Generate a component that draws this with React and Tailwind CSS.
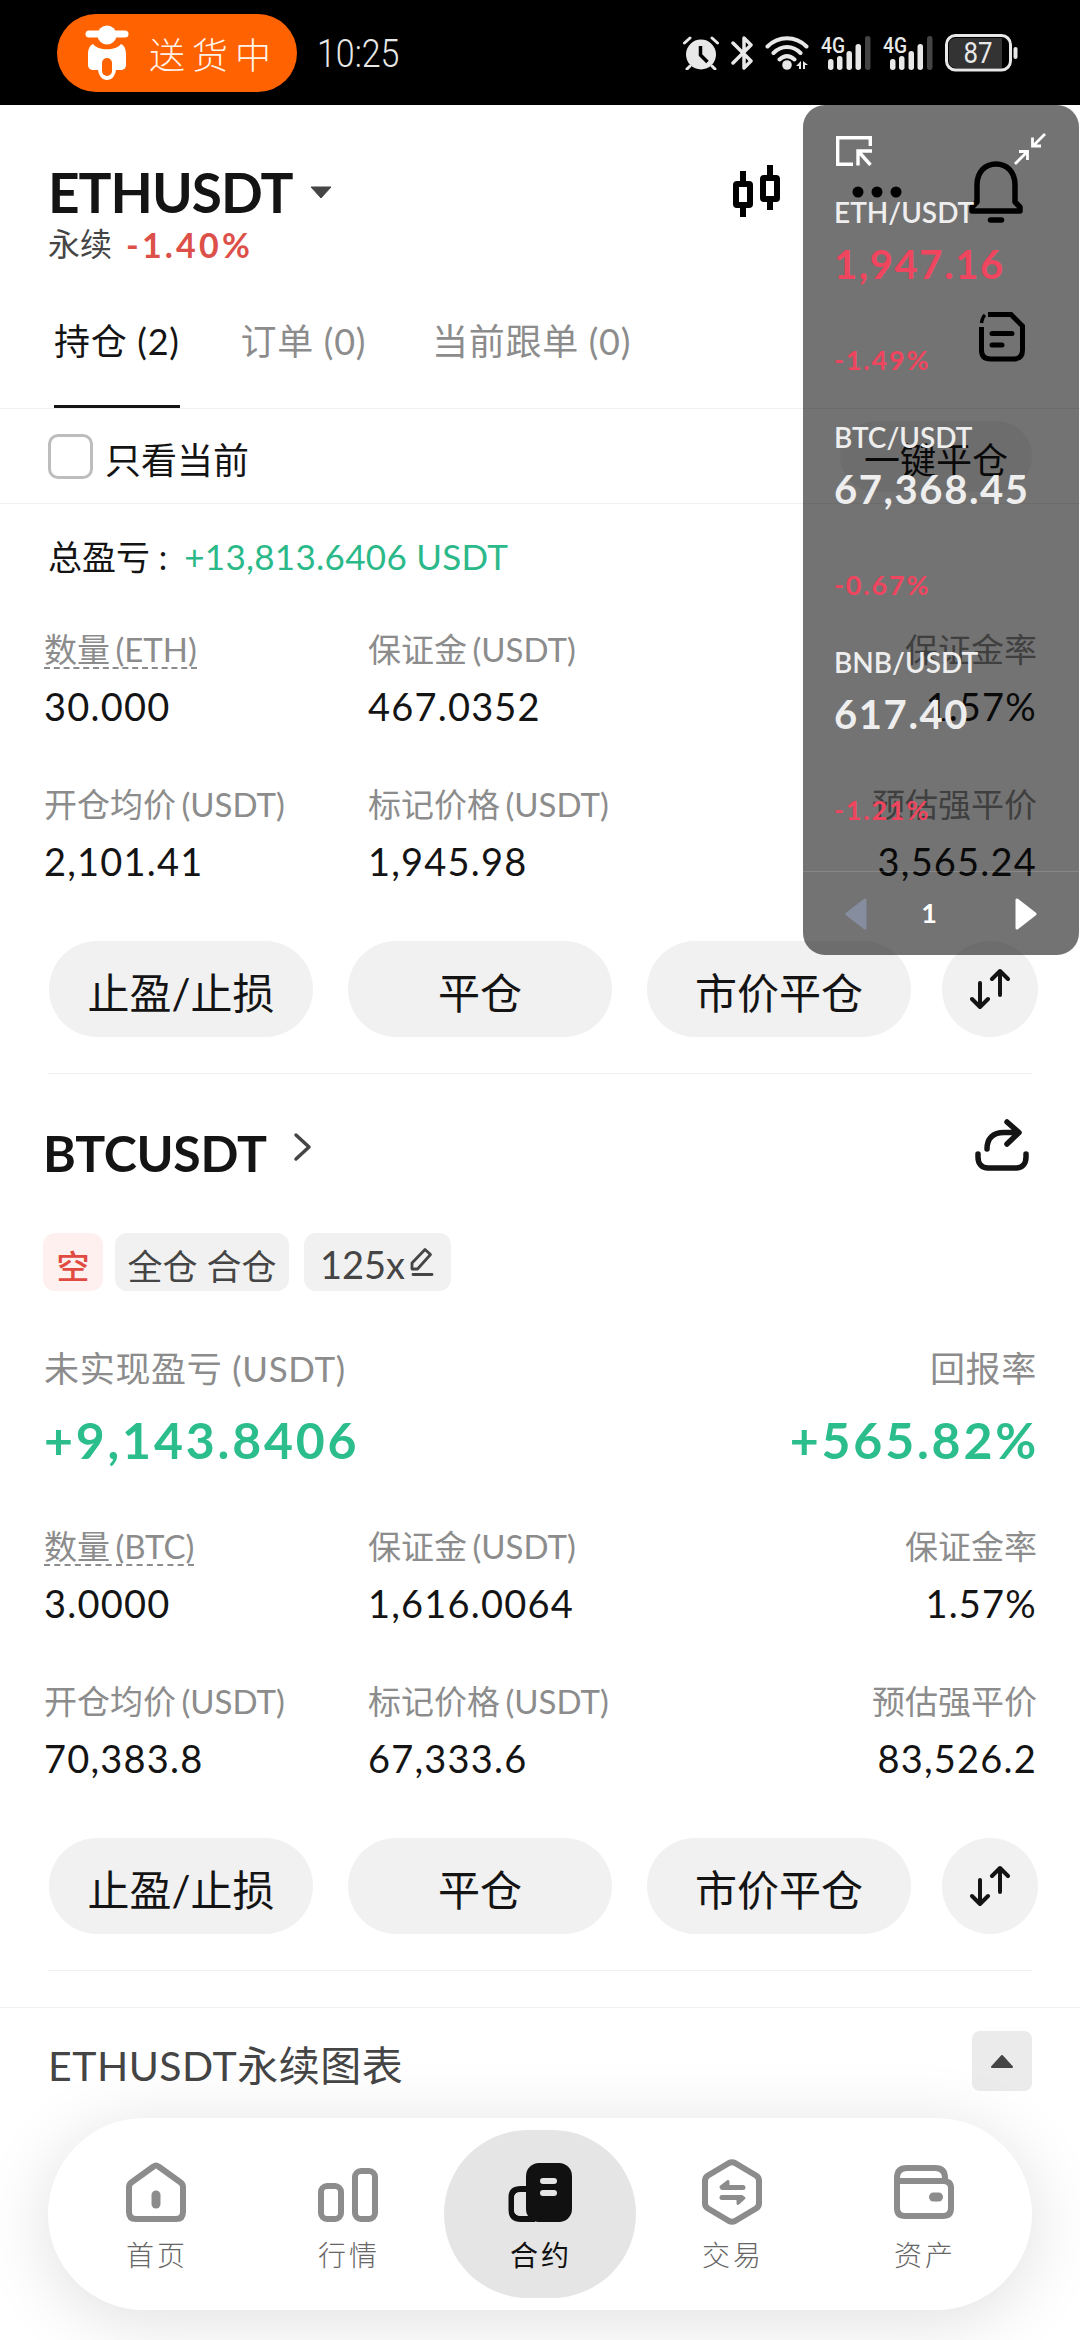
import React, { useState } from "react";

const ethStats = [
  { label: "数量 (ETH)", value: "30.000", dashed: true },
  { label: "保证金 (USDT)", value: "467.0352" },
  { label: "保证金率", value: "1.57%" },
  { label: "开仓均价 (USDT)", value: "2,101.41" },
  { label: "标记价格 (USDT)", value: "1,945.98" },
  { label: "预估强平价", value: "3,565.24" },
];

const btcStats = [
  { label: "数量 (BTC)", value: "3.0000", dashed: true },
  { label: "保证金 (USDT)", value: "1,616.0064" },
  { label: "保证金率", value: "1.57%" },
  { label: "开仓均价 (USDT)", value: "70,383.8" },
  { label: "标记价格 (USDT)", value: "67,333.6" },
  { label: "预估强平价", value: "83,526.2" },
];

const tickers = [
  { pair: "ETH/USDT", price: "1,947.16", change: "-1.49%", down: true },
  { pair: "BTC/USDT", price: "67,368.45", change: "-0.67%" },
  { pair: "BNB/USDT", price: "617.40", change: "-1.21%" },
];

/* ----------------- ICONS ------------------------ */

const ScooterIcon = () => (
  <svg width="44" height="56" viewBox="0 0 44 56">
    <path d="M4 9h36" stroke="#fff" strokeWidth="7" strokeLinecap="round" />
    <circle cx="22" cy="10" r="9.500" fill="#fff" />
    <path
      fill="#fff"
      d="M8 19c5 7 23 7 28 0 4 2 5 6 5 11v10c0 3-2 5-6 5h-4c-1 6-4 10-9 10s-8-4-9-10H9c-4 0-6-2-6-5V30c0-5 1-9 5-11z"
    />
    <rect x="17" y="33" width="10" height="18" rx="5" fill="#ff6200" />
  </svg>
);

const AlarmIcon = () => (
  <svg width="36" height="34" viewBox="0 0 36 34" fill="none" stroke="#e8e8e8" strokeLinecap="round">
    <circle cx="18" cy="18.500" r="15" fill="#e8e8e8" stroke="none" />
    <path d="M1.500 7 7 2M34.500 7 29 2M7 30l-3 3M29 30l3 3" strokeWidth="3" />
    <path d="M17.500 10v9l7 7" stroke="#000" strokeWidth="3.500" strokeLinecap="butt" />
  </svg>
);

const BluetoothIcon = () => (
  <svg width="22" height="34" viewBox="0 0 22 34" fill="none" stroke="#e8e8e8" strokeWidth="3.500" strokeLinejoin="round" strokeLinecap="round">
    <path d="M2 7l18 18-7 7V2l7 7L2 27" />
  </svg>
);

const WifiIcon = () => (
  <svg width="44" height="34" viewBox="0 0 44 34" fill="none" stroke="#e8e8e8" strokeWidth="4" strokeLinecap="round">
    <path d="M2.500 10.500c11-11 28-11 39 0M8.500 17c8-8 19-8 27 0M14.500 23.500c5-4.500 10-4.500 15 0" />
    <circle cx="22" cy="29" r="4.800" fill="#e8e8e8" stroke="none" />
    <path d="M31 30l5-5v8h-2v-3zM38 25l5 4h-3v4h-2z" fill="#e8e8e8" stroke="none" />
  </svg>
);

const SignalIcon = () => (
  <svg width="50" height="46" viewBox="0 -6 50 46">
    <text x="0" y="16.500" fontSize="22" fontWeight="500" fontFamily="Roboto, sans-serif" fill="#e8e8e8" textLength="24" lengthAdjust="spacingAndGlyphs">
      4G
    </text>
    <g fill="#e8e8e8">
      <rect x="7" y="23" width="5.500" height="11" rx="2.700" />
      <rect x="16" y="20" width="5.500" height="14" rx="2.700" />
      <rect x="25.500" y="15" width="5.500" height="19" rx="2.700" />
      <rect x="34.500" y="8" width="5.500" height="26" rx="2.700" />
    </g>
    <rect x="44" y="0" width="5.500" height="34" rx="2.700" fill="#444" />
  </svg>
);

const BatteryIcon = () => (
  <svg width="73" height="38" viewBox="0 0 73 38">
    <rect x="1.500" y="1.500" width="64" height="34.500" rx="9" fill="#000" stroke="#e8e8e8" strokeWidth="3" />
    <path d="M11 4h46v30H11q-7 0-7-7V11q0-7 7-7z" fill="#333" />
    <rect x="68.500" y="13" width="4" height="12" rx="2" fill="#e8e8e8" />
    <text x="33" y="29" textAnchor="middle" fontSize="29" fontFamily="Roboto, sans-serif" fill="#e8e8e8" textLength="29" lengthAdjust="spacingAndGlyphs">
      87
    </text>
  </svg>
);

const CandlesIcon = () => (
  <svg width="48" height="54" viewBox="0 0 48 54" fill="none" stroke="#000" strokeWidth="6">
    <path d="M10 6v10M10 43v9M37 0v10M37 36v9" />
    <rect x="3" y="19" width="14" height="21" rx="1" />
    <rect x="30" y="13" width="14" height="21" rx="1" />
  </svg>
);

const DotsIcon = () => (
  <svg width="50" height="12" viewBox="0 0 50 12">
    <circle cx="6" cy="6" r="5.500" />
    <circle cx="25" cy="6" r="5.500" />
    <circle cx="44" cy="6" r="5.500" />
  </svg>
);

const BellIcon = () => (
  <svg width="54" height="62" viewBox="0 0 54 62" fill="none" stroke="#000" strokeWidth="5.500" strokeLinecap="round" strokeLinejoin="round">
    <path d="M8 41V24C8 11 16 3 27 3S46 11 46 24v17l5 5v4H3v-4z" />
    <path d="M21.500 59h11" />
  </svg>
);

const DocIcon = () => (
  <svg width="46" height="50" viewBox="0 0 46 50" fill="none" stroke="#000" strokeWidth="5" strokeLinecap="round">
    <path d="M9 2.500h23l11.500 11.500v24q0 9-9 9H11.500q-9 0-9-9V15" strokeLinecap="butt" />
    <path d="M2.500 11q1-6 3.500-8" strokeWidth="3.500" strokeLinecap="butt" />
    <path d="M13 21.500h20M13 33h10" />
  </svg>
);

const SortIcon = () => (
  <svg width="40" height="42" viewBox="0 0 40 42" fill="none" stroke="#141414" strokeWidth="4" strokeLinecap="round" strokeLinejoin="round">
    <path d="M10 15v24M2 31l8 8 8-8M30 27V3M22 11l8-8 8 8" />
  </svg>
);

const ShareIcon = () => (
  <svg width="54" height="52" viewBox="0 0 54 52" fill="none" stroke="#141414" strokeWidth="5.500" strokeLinecap="round" strokeLinejoin="round">
    <path d="M12 30c0-11 6-16.500 17-16.500h14M32 3l12 10.500L32 25" />
    <path d="M3 35v3c0 7 4 11 10 11h28c6 0 10-4 10-11v-3" />
  </svg>
);

const PencilIcon = () => (
  <svg width="26" height="30" viewBox="0 0 26 30" fill="none" stroke="#454545" strokeWidth="2.800" strokeLinejoin="round" strokeLinecap="round">
    <path d="M3 22v-6L16 2.500l5.500 5L8.500 22z" />
    <path d="M4 27.500h19" />
  </svg>
);

const DetachIcon = () => (
  <svg width="36" height="30" viewBox="0 0 36 30" fill="none" stroke="#fff" strokeWidth="3.400">
    <path d="M34.300 10V1.700H1.700v26.600H17M22 29.500V15h14M23 16l11.500 13" />
  </svg>
);

const ShrinkIcon = () => (
  <svg width="34" height="34" viewBox="0 0 34 34" fill="none" stroke="#fff" strokeWidth="2.800">
    <path d="M32 2 20 14M19.500 5.500V14H28M2 32l12-12M6 19.500h8.500V28" />
  </svg>
);

const HomeIcon = () => (
  <svg width="60" height="66" viewBox="0 0 60 66" fill="none" stroke="#8c8c8c" strokeWidth="6" strokeLinejoin="round">
    <path d="M27.500 7.500q2.500-2 5 0L54 23q3 2 3 5v25q0 7-7 7H10q-7 0-7-7V28q0-3 3-5z" />
    <path d="M30 36v9" strokeWidth="9" strokeLinecap="round" />
  </svg>
);

const BarsIcon = () => (
  <svg width="60" height="66" viewBox="0 0 60 66" fill="none" stroke="#8c8c8c" strokeWidth="6">
    <rect x="3" y="27" width="20" height="33" rx="6" />
    <rect x="37" y="12" width="20" height="48" rx="6" />
  </svg>
);

const ContractIcon = () => (
  <svg width="64" height="66" viewBox="0 0 64 66">
    <rect x="18" y="4" width="46" height="59" rx="13" fill="#111" />
    <path d="M22 30h-9q-9.500 0-9.500 8v13q0 9 9.500 9h14" fill="none" stroke="#111" strokeWidth="6" />
    <rect x="6" y="33.500" width="12" height="23" rx="5" fill="#e5e5e5" />
    <rect x="32" y="19" width="17" height="6" rx="3" fill="#e5e5e5" />
    <rect x="32" y="31" width="17" height="6" rx="3" fill="#e5e5e5" />
  </svg>
);

const TradeIcon = () => (
  <svg width="60" height="66" viewBox="0 0 60 66" fill="none" stroke="#8c8c8c" strokeWidth="6" strokeLinejoin="round">
    <path d="M27 4q3-1.500 6 0l21 12.500q3 2 3 5v23q0 3-3 5L33 62q-3 1.500-6 0L6 49.500q-3-2-3-5v-23q0-3 3-5z" />
    <path d="M20.500 28.500h20.500M39.500 38.500H20" strokeWidth="5" strokeLinecap="round" />
    <path d="M19 28l7-5.500V28zM42 39l-6 5.500V39z" strokeWidth="3" fill="#8c8c8c" />
  </svg>
);

const WalletIcon = () => (
  <svg width="60" height="66" viewBox="0 0 60 66" fill="none" stroke="#8c8c8c" strokeWidth="6">
    <path d="M3 24v-5q0-10 10-10h28q10 0 10 10v5" />
    <path d="M3 22h46q8 0 8 7v20q0 8-8 8H11q-8 0-8-8z" />
    <path d="M39.500 38h5" strokeWidth="9" strokeLinecap="round" />
  </svg>
);

const navItems = [
  { name: "首页", icon: <HomeIcon /> },
  { name: "行情", icon: <BarsIcon /> },
  { name: "合约", icon: <ContractIcon />, active: true },
  { name: "交易", icon: <TradeIcon /> },
  { name: "资产", icon: <WalletIcon /> },
];

/* ----------------- PARTS ------------------------ */

const StatusBar = () => (
  <div className="flex h-[105px] items-center justify-between bg-black pr-[62px] pl-[57px]">
    <div className="flex items-center">
      <div className="flex h-[78px] w-60 items-center rounded-full bg-[#ff6200] pl-7">
        <ScooterIcon />
        <span className="ml-5 pt-1 text-[36px] font-light tracking-[7px] whitespace-nowrap text-[#fff3e8]">送货中</span>
      </div>
      <span className="mt-1 ml-5 origin-left scale-x-[.87] font-[Roboto] text-[39px] leading-none font-light text-[#e8e8e8]">
        10:25
      </span>
    </div>
    <div className="flex items-center gap-3">
      <AlarmIcon />
      <BluetoothIcon />
      <WifiIcon />
      <SignalIcon />
      <SignalIcon />
      <BatteryIcon />
    </div>
  </div>
);

const Stats = ({ stats }) => (
  <div className="grid grid-cols-[324px_344px_1fr] gap-y-[41px] pr-[43px] pl-11">
    {stats.map((s, i) => (
      <div key={s.label} className={i % 3 === 2 ? "text-right" : ""}>
        <div className="flex h-[58px] items-center text-[33px] leading-[58px] text-[#8c8c8c] [word-spacing:-3px]">
          <span
            className={
              s.dashed
                ? "mt-0.5 border-b-2 border-dashed border-[#8c8c8c] leading-[36px]"
                : i % 3 === 2
                ? "ml-auto"
                : ""
            }
          >
            {s.label}
          </span>
        </div>
        <div className="h-14 text-[38px] leading-[56px] tracking-[1.2px] text-[#141414]">{s.value}</div>
      </div>
    ))}
  </div>
);

const Actions = () => (
  <div className="mt-[52px] flex h-24 items-center pr-[42px] pl-[49px] text-[42px] text-[#141414]">
    <button className="h-24 w-[264px] rounded-full bg-[#f1f1f1] pt-2">止盈/止损</button>
    <button className="ml-[35px] h-24 w-[264px] rounded-full bg-[#f1f1f1] pt-2">平仓</button>
    <button className="ml-[35px] h-24 w-[264px] rounded-full bg-[#f1f1f1] pt-2">市价平仓</button>
    <button className="ml-auto flex size-24 items-center justify-center rounded-full bg-[#f1f1f1]">
      <SortIcon />
    </button>
  </div>
);

const TickerPanel = () => {
  const [page] = useState(1);

  return (
    <div className="absolute top-[105px] left-[803px] flex h-[850px] w-[276px] flex-col rounded-[22px] bg-black/55 text-[#eee]">
      <div className="flex h-[87px] items-start justify-between pt-[27px] pr-[32px] pl-[33px]">
        <div className="pt-1">
          <DetachIcon />
        </div>
        <ShrinkIcon />
      </div>
      {tickers.map((t) => (
        <div key={t.pair} className="h-[225px] pl-[31px] font-bold">
          <div className="h-10 text-[28px] leading-10 font-semibold">{t.pair}</div>
          <div className={`h-16 text-[40px] leading-16 tracking-[1.6px] ${t.down ? "text-[#f0455e]" : ""}`}>
            {t.price}
          </div>
          <div className="mt-11 h-10 text-[27px] leading-10 tracking-[1.8px] text-[#f0455e]">{t.change}</div>
        </div>
      ))}
      <div className="mt-1 flex flex-1 items-center justify-between border-t border-white/15 pr-[42px] pl-[42px]">
        <svg width="22" height="32" viewBox="0 0 22 32">
          <path d="M20 2v28L2 16z" fill="#868d9f" stroke="#868d9f" strokeWidth="3" strokeLinejoin="round" />
        </svg>
        <span className="mr-6 text-[27px] font-bold text-white">{page}</span>
        <svg width="22" height="32" viewBox="0 0 22 32">
          <path d="M2 2v28l18-14z" fill="#fff" stroke="#fff" strokeWidth="3" strokeLinejoin="round" />
        </svg>
      </div>
    </div>
  );
};

const App = () => {
  return (
    <div className="relative flex h-[2340px] w-[1080px] flex-col overflow-hidden bg-white font-[Lato,'Noto_Sans_CJK_SC',sans-serif] text-[#141414]">
      <StatusBar />

      {/* header */}
      <div className="flex h-[168px] justify-between pt-[57px] pr-[57px] pl-12">
        <div>
          <div className="flex h-[60px] items-center gap-[18px]">
            <span className="text-[55px] leading-[60px] font-bold tracking-[-1px]">ETHUSDT</span>
            <svg width="22" height="13" viewBox="0 0 22 13">
              <path d="M1 1h20L11 12z" fill="#454545" stroke="#454545" strokeLinejoin="round" />
            </svg>
          </div>
          <div className="flex h-11 items-center gap-[14px]">
            <span className="text-[32px] text-[#454545]">永续</span>
            <span className="text-[34px] font-bold tracking-[3.200px] text-[#dc5049]">-1.40%</span>
          </div>
        </div>
        <div className="flex h-[60px] items-center">
          <CandlesIcon />
          <div className="ml-[71px]">
            <DotsIcon />
          </div>
          <div className="ml-[67px]">
            <BellIcon />
          </div>
        </div>
      </div>

      {/* tabs */}
      <div className="flex h-[136px] items-center justify-between border-b border-[#f0f0f0] pr-[55px] pl-[54px] text-[36px] tracking-[.7px] text-[#8c8c8c]">
        <div className="flex h-full items-stretch">
          <span className="flex items-center border-b-[3px] border-[#141414] pt-[3px] text-[#141414]">
            持仓 (2)
          </span>
          <span className="ml-[61px] flex items-center">订单 (0)</span>
          <span className="ml-[66px] flex items-center">当前跟单 (0)</span>
        </div>
        <div className="mb-2">
          <DocIcon />
        </div>
      </div>

      {/* filter */}
      <div className="flex h-[95px] items-center border-b border-[#f0f0f0] pr-12 pl-12">
        <span className="size-[45px] rounded-[10px] border-[3px] border-[#bdbdbd]"></span>
        <span className="ml-3 pt-2 text-[36px]">只看当前</span>
        <button className="ml-auto h-[71px] w-48 rounded-full bg-[#f1f1f1] pt-2 text-[36px]">一键平仓</button>
      </div>

      <div className="flex h-[116px] items-center pb-[11px] pl-12 text-[34px]">
        <span>总盈亏 :</span>
        <span className="ml-[17px] text-[35px] tracking-[.3px] text-[#2bb98a]">+13,813.6406 USDT</span>
      </div>

      <Stats stats={ethStats} />
      <Actions />

      <div className="mx-12 mt-9 h-px bg-[#f0f0f0]"></div>

      {/* BTC position */}
      <div className="mt-[39px] flex h-20 items-center justify-between pr-[51px] pl-[43px]">
        <div className="flex items-center gap-[26px]">
          <span className="text-[50px] leading-20 font-bold tracking-[-.3px]">BTCUSDT</span>
          <svg width="20" height="30" viewBox="0 0 20 30" fill="none" className="mb-3">
            <path d="M3 3l13 12L3 27" stroke="#454545" strokeWidth="3.500" strokeLinecap="round" strokeLinejoin="round" />
          </svg>
        </div>
        <div className="mb-4">
          <ShareIcon />
        </div>
      </div>

      <div className="mt-10 flex h-[58px] items-center pl-[43px] text-[35px] leading-[58px] text-[#454545]">
        <span className="h-[58px] w-15 rounded-xl bg-[#fdf0ef] pt-1 text-center text-[33px] font-medium text-[#e04a40]">
          空
        </span>
        <span className="ml-3 h-[58px] w-[174px] rounded-xl bg-[#f1f1f1] pt-1 text-center">全仓 合仓</span>
        <span className="ml-[15px] flex h-[58px] w-[147px] items-center rounded-xl bg-[#f1f1f1] pl-4">
          <span className="pt-1 text-[38px]">125x</span>
          <span className="ml-1">
            <PencilIcon />
          </span>
        </span>
      </div>

      <div className="mt-[53px] flex h-12 items-center justify-between pr-[43px] pl-11 text-[35px] tracking-[.7px] text-[#8c8c8c]">
        <span>未实现盈亏 (USDT)</span>
        <span>回报率</span>
      </div>
      <div className="mt-4 mb-[45px] flex h-16 items-center justify-between pr-[41px] pl-11 text-[50px] font-bold tracking-[2.800px] text-[#2bbd8b]">
        <span>+9,143.8406</span>
        <span>+565.82%</span>
      </div>

      <Stats stats={btcStats} />
      <Actions />

      <div className="mx-12 mt-9 h-px bg-[#f0f0f0]"></div>

      {/* chart drawer */}
      <div className="mt-9 flex h-[107px] items-center justify-between border-t border-[#f0f0f0] px-12">
        <span className="pt-2.5 text-[41px] tracking-[.5px] text-[#454545]">ETHUSDT永续图表</span>
        <span className="flex size-15 items-center justify-center rounded-lg bg-[#ebebeb]">
          <svg width="24" height="15" viewBox="0 0 24 15">
            <path d="M2 13h20L12 2z" fill="#454545" stroke="#454545" strokeWidth="2" strokeLinejoin="round" />
          </svg>
        </span>
      </div>

      <div className="mx-12 mt-1 flex h-48 shrink-0 items-center justify-center rounded-full bg-white shadow-[0_10px_70px_rgba(0,0,0,0.13)]">
        {navItems.map((item) => (
          <div
            key={item.name}
            className={`flex h-[168px] w-48 flex-col items-center rounded-full pt-[29px] ${
              item.active ? "bg-[#e5e5e5] font-normal text-[#111]" : "font-light text-[#666]"
            }`}
          >
            {item.icon}
            <span className="mt-3 pl-0.5 text-[28px] leading-9 tracking-[3px]">{item.name}</span>
          </div>
        ))}
      </div>

      <TickerPanel />
    </div>
  );
};

export default App;
